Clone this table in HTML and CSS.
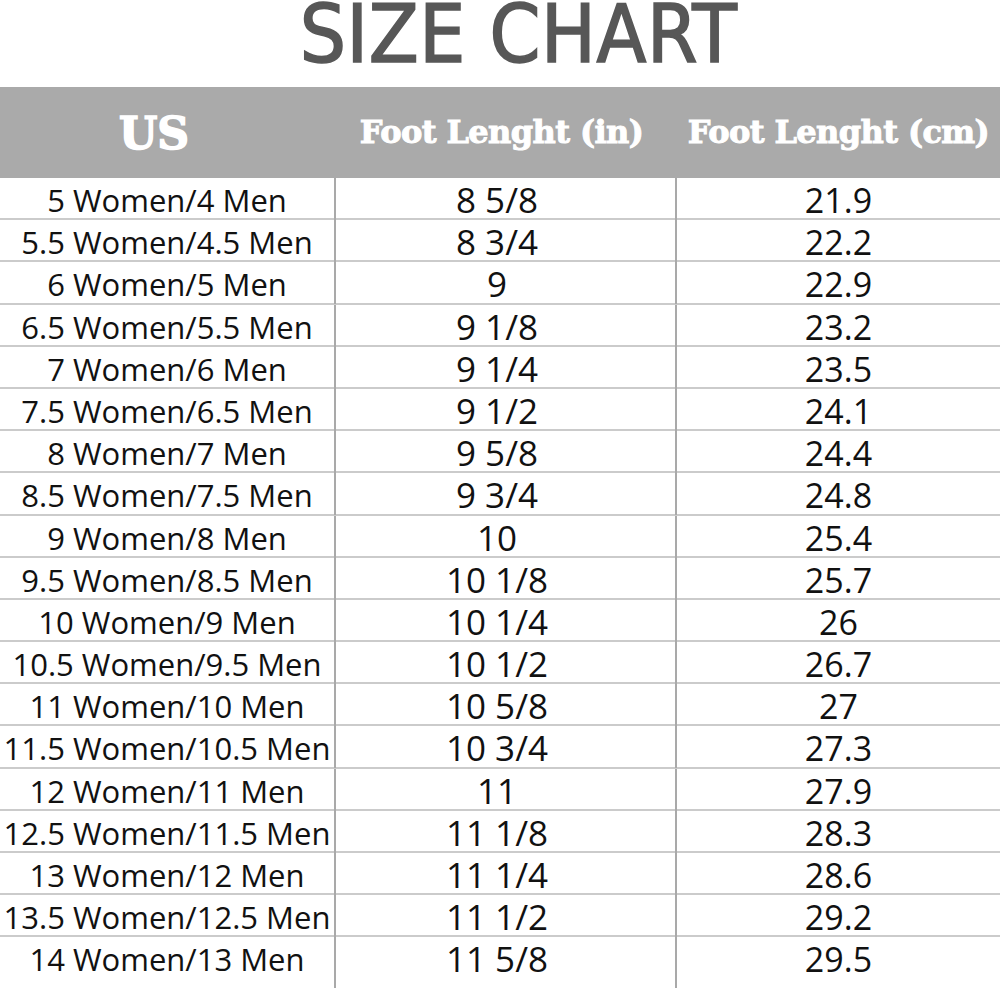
FILE: index.html
```html
<!DOCTYPE html>
<html>
<head>
<meta charset="utf-8">
<link rel="stylesheet" href="styles.css">
</head>
<body>
<div class="page">
  <h1 class="title">SIZE CHART</h1>
  <div class="chart">
    <div class="head">
      <div class="hcell us">US</div>
      <div class="hcell in">Foot Lenght (in)</div>
      <div class="hcell cm">Foot Lenght (cm)</div>
    </div>
    <div class="row"><div class="c1">5 Women/4 Men</div><div class="c2">8 5/8</div><div class="c3">21.9</div></div>
    <div class="row"><div class="c1">5.5 Women/4.5 Men</div><div class="c2">8 3/4</div><div class="c3">22.2</div></div>
    <div class="row"><div class="c1">6 Women/5 Men</div><div class="c2">9</div><div class="c3">22.9</div></div>
    <div class="row"><div class="c1">6.5 Women/5.5 Men</div><div class="c2">9 1/8</div><div class="c3">23.2</div></div>
    <div class="row"><div class="c1">7 Women/6 Men</div><div class="c2">9 1/4</div><div class="c3">23.5</div></div>
    <div class="row"><div class="c1">7.5 Women/6.5 Men</div><div class="c2">9 1/2</div><div class="c3">24.1</div></div>
    <div class="row"><div class="c1">8 Women/7 Men</div><div class="c2">9 5/8</div><div class="c3">24.4</div></div>
    <div class="row"><div class="c1">8.5 Women/7.5 Men</div><div class="c2">9 3/4</div><div class="c3">24.8</div></div>
    <div class="row"><div class="c1">9 Women/8 Men</div><div class="c2">10</div><div class="c3">25.4</div></div>
    <div class="row"><div class="c1">9.5 Women/8.5 Men</div><div class="c2">10 1/8</div><div class="c3">25.7</div></div>
    <div class="row"><div class="c1">10 Women/9 Men</div><div class="c2">10 1/4</div><div class="c3">26</div></div>
    <div class="row"><div class="c1">10.5 Women/9.5 Men</div><div class="c2">10 1/2</div><div class="c3">26.7</div></div>
    <div class="row"><div class="c1">11 Women/10 Men</div><div class="c2">10 5/8</div><div class="c3">27</div></div>
    <div class="row"><div class="c1">11.5 Women/10.5 Men</div><div class="c2">10 3/4</div><div class="c3">27.3</div></div>
    <div class="row"><div class="c1">12 Women/11 Men</div><div class="c2">11</div><div class="c3">27.9</div></div>
    <div class="row"><div class="c1">12.5 Women/11.5 Men</div><div class="c2">11 1/8</div><div class="c3">28.3</div></div>
    <div class="row"><div class="c1">13 Women/12 Men</div><div class="c2">11 1/4</div><div class="c3">28.6</div></div>
    <div class="row"><div class="c1">13.5 Women/12.5 Men</div><div class="c2">11 1/2</div><div class="c3">29.2</div></div>
    <div class="row last"><div class="c1">14 Women/13 Men</div><div class="c2">11 5/8</div><div class="c3">29.5</div></div>
  </div>
</div>
</body>
</html>
```
FILE: styles.css
```css
html, body {
  margin: 0;
  padding: 0;
  background: #ffffff;
}

.page {
  width: 1000px;
  height: 988px;
  display: flex;
  flex-direction: column;
  overflow: hidden;
}

.title {
  margin: 0;
  height: 87px;
  padding-left: 37px;
  box-sizing: border-box;
  text-align: center;
  font-family: "DejaVu Sans Condensed", "DejaVu Sans", sans-serif;
  font-stretch: condensed;
  font-weight: normal;
  font-size: 81px;
  line-height: 68px;
  letter-spacing: 0.6px;
  color: #575757;
  -webkit-text-stroke: 1.6px #575757;
  white-space: nowrap;
}

.chart {
  flex: 1;
  display: flex;
  flex-direction: column;
}

.head {
  height: 91px;
  background: #aaaaaa;
  display: grid;
  grid-template-columns: 336px 341px 1fr;
  color: #ffffff;
  font-family: "DejaVu Serif", "Liberation Serif", serif;
  font-weight: bold;
  white-space: nowrap;
  -webkit-text-stroke: 1px #ffffff;
}

.hcell {
  text-align: center;
  line-height: 1;
}

.hcell.us {
  font-size: 44px;
  padding-top: 25px;
  padding-right: 28px;
  -webkit-text-stroke: 1.6px #ffffff;
}

.hcell.in,
.hcell.cm {
  font-size: 32px;
  padding-top: 29px;
  letter-spacing: -0.6px;
}

.hcell.in {
  padding-right: 10px;
}

.row {
  height: 42.2px;
  flex: none;
  box-sizing: border-box;
  border-bottom: 2px solid #cbcbcb;
  display: grid;
  grid-template-columns: 336px 341px 1fr;
  font-family: "Open Sans", "Noto Sans", sans-serif;
  color: #111111;
  white-space: nowrap;
}

.row.last {
  flex: 1;
  border-bottom: none;
}

.c1, .c2, .c3 {
  text-align: center;
  line-height: 40px;
  padding-top: 2px;
  box-sizing: border-box;
}

.c1 {
  font-size: 31px;
  border-right: 2px solid #a9a9a9;
}

.c2 {
  font-size: 35px;
  padding-right: 17px;
  border-right: 2px solid #a9a9a9;
}

.c3 {
  font-size: 34px;
}
```
